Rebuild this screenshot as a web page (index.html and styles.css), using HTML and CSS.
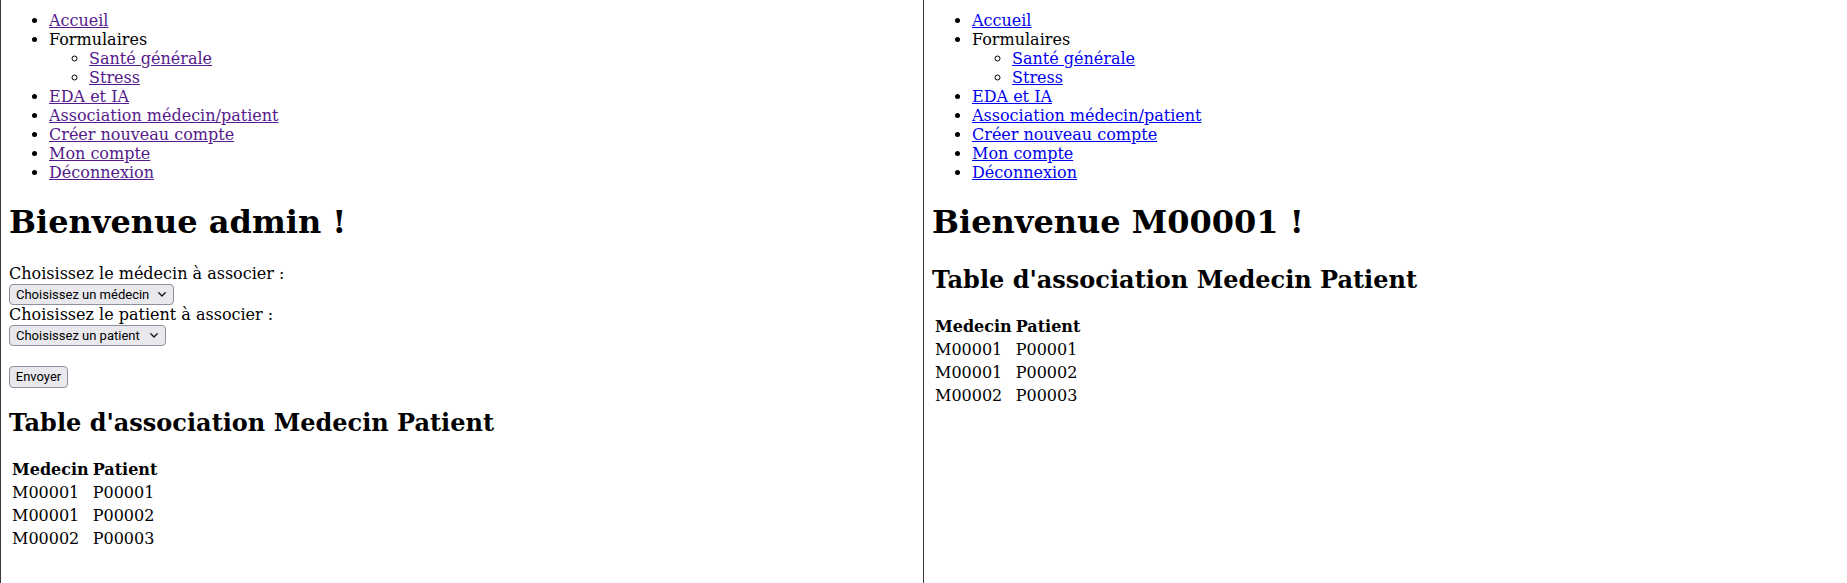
FILE: index.html
```html
<!DOCTYPE html>
<html lang="fr">
<head>
<meta charset="utf-8">
<title>Association médecin/patient</title>
<link rel="stylesheet" href="styles.css">
</head>
<body class="page">
<div class="split">
  <section class="pane pane-left">
    <ul class="nav">
      <li><a class="nav-link visited" href="#">Accueil</a></li>
      <li>Formulaires
        <ul class="subnav">
          <li><a class="nav-link visited" href="#">Santé générale</a></li>
          <li><a class="nav-link visited" href="#">Stress</a></li>
        </ul>
      </li>
      <li><a class="nav-link visited" href="#">EDA et IA</a></li>
      <li><a class="nav-link visited" href="#">Association médecin/patient</a></li>
      <li><a class="nav-link visited" href="#">Créer nouveau compte</a></li>
      <li><a class="nav-link visited" href="#">Mon compte</a></li>
      <li><a class="nav-link visited" href="#">Déconnexion</a></li>
    </ul>
    <h1 class="title">Bienvenue admin !</h1>
    <form class="assoc-form">
      <label class="field-label" for="medecin">Choisissez le médecin à associer :</label><br>
      <span class="select-wrap select-medecin">
        <select class="picker" id="medecin">
          <option>Choisissez un médecin</option>
        </select>
        <svg class="chevron" width="8" height="5" viewBox="0 0 8 5" aria-hidden="true"><path d="M0.8 0.8 L4 4 L7.2 0.8" fill="none" stroke="#1a1a1a" stroke-width="1.4" stroke-linecap="round" stroke-linejoin="round"/></svg>
      </span><br>
      <label class="field-label" for="patient">Choisissez le patient à associer :</label><br>
      <span class="select-wrap select-patient">
        <select class="picker" id="patient">
          <option>Choisissez un patient</option>
        </select>
        <svg class="chevron" width="8" height="5" viewBox="0 0 8 5" aria-hidden="true"><path d="M0.8 0.8 L4 4 L7.2 0.8" fill="none" stroke="#1a1a1a" stroke-width="1.4" stroke-linecap="round" stroke-linejoin="round"/></svg>
      </span><br><br>
      <button class="submit" type="button">Envoyer</button>
    </form>
    <h2 class="subtitle">Table d'association Medecin Patient</h2>
    <table class="assoc-table">
      <thead>
        <tr><th>Medecin</th><th>Patient</th></tr>
      </thead>
      <tbody>
        <tr><td>M00001</td><td>P00001</td></tr>
        <tr><td>M00001</td><td>P00002</td></tr>
        <tr><td>M00002</td><td>P00003</td></tr>
      </tbody>
    </table>
  </section>
  <section class="pane pane-right">
    <ul class="nav">
      <li><a class="nav-link" href="#">Accueil</a></li>
      <li>Formulaires
        <ul class="subnav">
          <li><a class="nav-link" href="#">Santé générale</a></li>
          <li><a class="nav-link" href="#">Stress</a></li>
        </ul>
      </li>
      <li><a class="nav-link" href="#">EDA et IA</a></li>
      <li><a class="nav-link" href="#">Association médecin/patient</a></li>
      <li><a class="nav-link" href="#">Créer nouveau compte</a></li>
      <li><a class="nav-link" href="#">Mon compte</a></li>
      <li><a class="nav-link" href="#">Déconnexion</a></li>
    </ul>
    <h1 class="title">Bienvenue M00001 !</h1>
    <h2 class="subtitle subtitle-after-title">Table d'association Medecin Patient</h2>
    <table class="assoc-table">
      <thead>
        <tr><th>Medecin</th><th>Patient</th></tr>
      </thead>
      <tbody>
        <tr><td>M00001</td><td>P00001</td></tr>
        <tr><td>M00001</td><td>P00002</td></tr>
        <tr><td>M00002</td><td>P00003</td></tr>
      </tbody>
    </table>
  </section>
</div>
</body>
</html>
```

FILE: styles.css
```css
html, body {
  margin: 0;
  padding: 0;
  background: #ffffff;
}

.page {
  font-family: "DejaVu Serif", serif;
  font-size: 16px;
  color: #000000;
}

.split {
  display: flex;
  height: 583px;
  overflow: hidden;
}

.pane {
  box-sizing: border-box;
  border-left: 1px solid #3a3a3a;
  padding: 0 8px;
  height: 100%;
  overflow: hidden;
}

.pane-left {
  width: 923px;
}

.pane-right {
  width: 924px;
}

.nav {
  margin: 11px 0 0 0;
  padding-left: 40px;
  list-style: disc;
}

.subnav {
  margin: 0;
  padding-left: 40px;
  list-style: circle;
}

.nav-link {
  color: #0000ee;
  text-decoration: underline;
}

.nav-link.visited {
  color: #551a8b;
}

.title {
  font-size: 32px;
  font-weight: bold;
  margin: 21.44px 0;
}

.subtitle {
  font-size: 24px;
  font-weight: bold;
  margin: 19.92px 0;
}

.subtitle-after-title {
  margin-top: 24px;
}

.assoc-form {
  margin: 0;
  padding-top: 1.5px;
}

.select-wrap {
  position: relative;
  display: inline-block;
  vertical-align: top;
  margin-top: 1px;
  height: 21px;
}

.select-medecin {
  width: 165px;
}

.select-patient {
  width: 157px;
}

.picker {
  -webkit-appearance: none;
  appearance: none;
  box-sizing: border-box;
  width: 100%;
  height: 21px;
  margin: 0;
  padding: 0 0 0 6px;
  border: 1px solid #8f8f9d;
  border-radius: 4px;
  background: #e9e9ed;
  color: #000000;
  font-family: Roboto, "Noto Sans", sans-serif;
  font-size: 13px;
  line-height: 19px;
}

.chevron {
  position: absolute;
  right: 8px;
  top: 8px;
  pointer-events: none;
}

.submit {
  -webkit-appearance: none;
  appearance: none;
  box-sizing: border-box;
  vertical-align: top;
  margin: 1px 0 0 0;
  width: 59px;
  height: 22px;
  padding: 0;
  border: 1px solid #8f8f9d;
  border-radius: 4px;
  background: #e9e9ed;
  color: #000000;
  font-family: Roboto, "Noto Sans", sans-serif;
  font-size: 13px;
  line-height: 20px;
  text-align: center;
}

.assoc-table {
  border-spacing: 2px;
  margin-top: 1px;
}

.assoc-table th,
.assoc-table td {
  padding: 1px;
  text-align: left;
}

.assoc-table th {
  font-weight: bold;
}
```
